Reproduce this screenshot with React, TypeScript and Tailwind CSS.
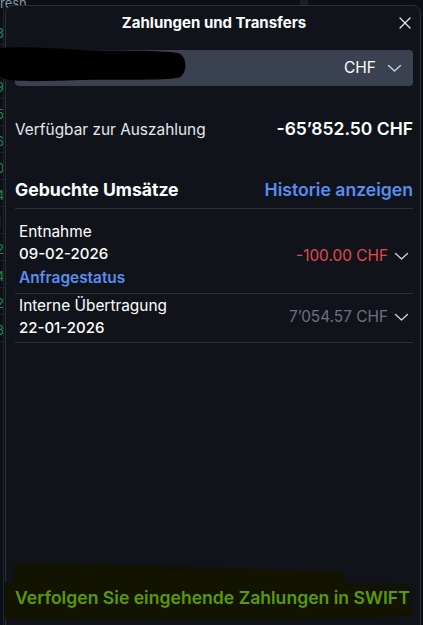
import React from "react";

function Chevron({ className = "" }: { className?: string }) {
  return (
    <svg width="15" height="14" viewBox="0 0 15 14" className={className} fill="none">
      <path d="M1.5 4.5 L7.5 10 L13.5 4.5" stroke="currentColor" strokeWidth="1.3" strokeLinecap="round" strokeLinejoin="round" />
    </svg>
  );
}

export default function App() {
  const digits = ["3", "5", "9", "5", "6", "0", "4", "1", "2", "4", "2", "3"];
  return (
    <div
      className="relative w-[423px] h-[625px] overflow-hidden bg-[#0c0f14] text-white"
      style={{ fontFamily: "Inter, 'Noto Sans', sans-serif" }}
    >
      {/* background app peeking on the left */}
      <div className="absolute left-0 top-0 w-[5px] h-full flex flex-col">
        <div className="absolute left-[3px] top-0 w-px h-full bg-[#1e2530]" />
        <div className="absolute left-0 top-[-6px] text-[13px] text-[#8a94a3] whitespace-nowrap">resh</div>
        <div className="flex flex-col pt-[22px] gap-[4px]">
          {digits.map((d, i) => (
            <div key={i} className="text-[13px] leading-[22px] text-[#1f8a4c] ml-[-4px] border-b border-[#1b222c]">
              {d}
            </div>
          ))}
        </div>
      </div>
      <div className="absolute left-[300px] top-0 w-[8px] h-[5px] bg-[#1a1f28]" />

      {/* modal */}
      <div className="absolute left-[5px] top-[5px] w-[416px] h-[640px] rounded-[8px] border border-[#2a303b] bg-[#10131a] flex flex-col pl-[9px] pr-[7px]">
        {/* header */}
        <div className="relative h-[34px] flex items-center justify-center">
          <span className="text-[15px] font-bold text-white">Zahlungen und Transfers</span>
          <svg className="absolute right-[2px] top-[11px]" width="12" height="12" viewBox="0 0 12 12">
            <path d="M1 1 L11 11 M11 1 L1 11" stroke="#e5e7eb" strokeWidth="1.3" strokeLinecap="round" />
          </svg>
        </div>

        {/* select */}
        <div className="relative mt-[10px] h-[36px] rounded-[4px] bg-[#3a4150] flex items-center justify-end pr-[11px] gap-[11px]">
          <span className="text-[15.5px] text-white">CHF</span>
          <Chevron className="text-[#d1d5db]" />
        </div>

        {/* available */}
        <div className="mt-[30px] flex items-center justify-between">
          <span className="text-[15.4px] text-[#e5e7eb]">Verfügbar zur Auszahlung</span>
          <span className="text-[17.5px] font-semibold text-white">-65’852.50 CHF</span>
        </div>

        {/* booked */}
        <div className="mt-[35px] flex items-center justify-between pb-[4px] border-b border-[#2a2f38]">
          <span className="text-[17.6px] font-bold text-white">Gebuchte Umsätze</span>
          <span className="text-[17.6px] font-semibold text-[#5b8def]">Historie anzeigen</span>
        </div>

        {/* row 1 */}
        <div className="flex items-center justify-between pl-[4px] pr-[4px] pt-[12px] pb-[2px] border-b border-[#2a2f38]">
          <div className="flex flex-col">
            <span className="text-[15.4px] leading-[22px] text-white">Entnahme</span>
            <span className="text-[15px] leading-[22px] font-medium text-white">09-02-2026</span>
            <span className="text-[15.4px] leading-[26px] font-semibold text-[#5b8def]">Anfragestatus</span>
          </div>
          <div className="flex items-center gap-[6px]">
            <span className="text-[15.4px] text-[#e5484d]">-100.00 CHF</span>
            <Chevron className="text-[#d1d5db]" />
          </div>
        </div>

        {/* row 2 */}
        <div className="flex items-center justify-between pl-[4px] pr-[4px] pt-[1px] pb-[3px] border-b border-[#2a2f38]">
          <div className="flex flex-col">
            <span className="text-[15.4px] leading-[22px] text-white">Interne Übertragung</span>
            <span className="text-[15px] leading-[22px] font-medium text-white">22-01-2026</span>
          </div>
          <div className="flex items-center gap-[6px]">
            <span className="text-[15.4px] text-[#6b7280]">7’054.57 CHF</span>
            <Chevron className="text-[#d1d5db]" />
          </div>
        </div>

        <div className="flex-1" />
      </div>

      {/* redaction scribble over select */}
      <svg className="absolute left-0 top-[45px]" width="190" height="40" viewBox="0 0 190 40">
        <path
          d="M0 3 C20 1 50 3 80 5 C120 6 160 5 178 8 C188 11 188 30 178 33 C150 36 110 34 80 35 C50 36 25 37 10 35 C3 34 0 32 0 30 Z"
          fill="#000"
        />
      </svg>

      {/* bottom scribble + link */}
      <svg className="absolute left-[5px] top-[562px]" width="410" height="62" viewBox="0 0 410 62">
        <path
          d="M0 20 L8 20 L10 2 C60 1 200 5 340 10 L340 21 L406 22 L408 54 C300 58 150 59 0 57 Z"
          fill="#121300"
        />
      </svg>
      <div className="absolute left-[15px] top-[585px] text-[17.6px] font-semibold text-[#5a9a0a] whitespace-nowrap">
        Verfolgen Sie eingehende Zahlungen in SWIFT
      </div>
    </div>
  );
}
